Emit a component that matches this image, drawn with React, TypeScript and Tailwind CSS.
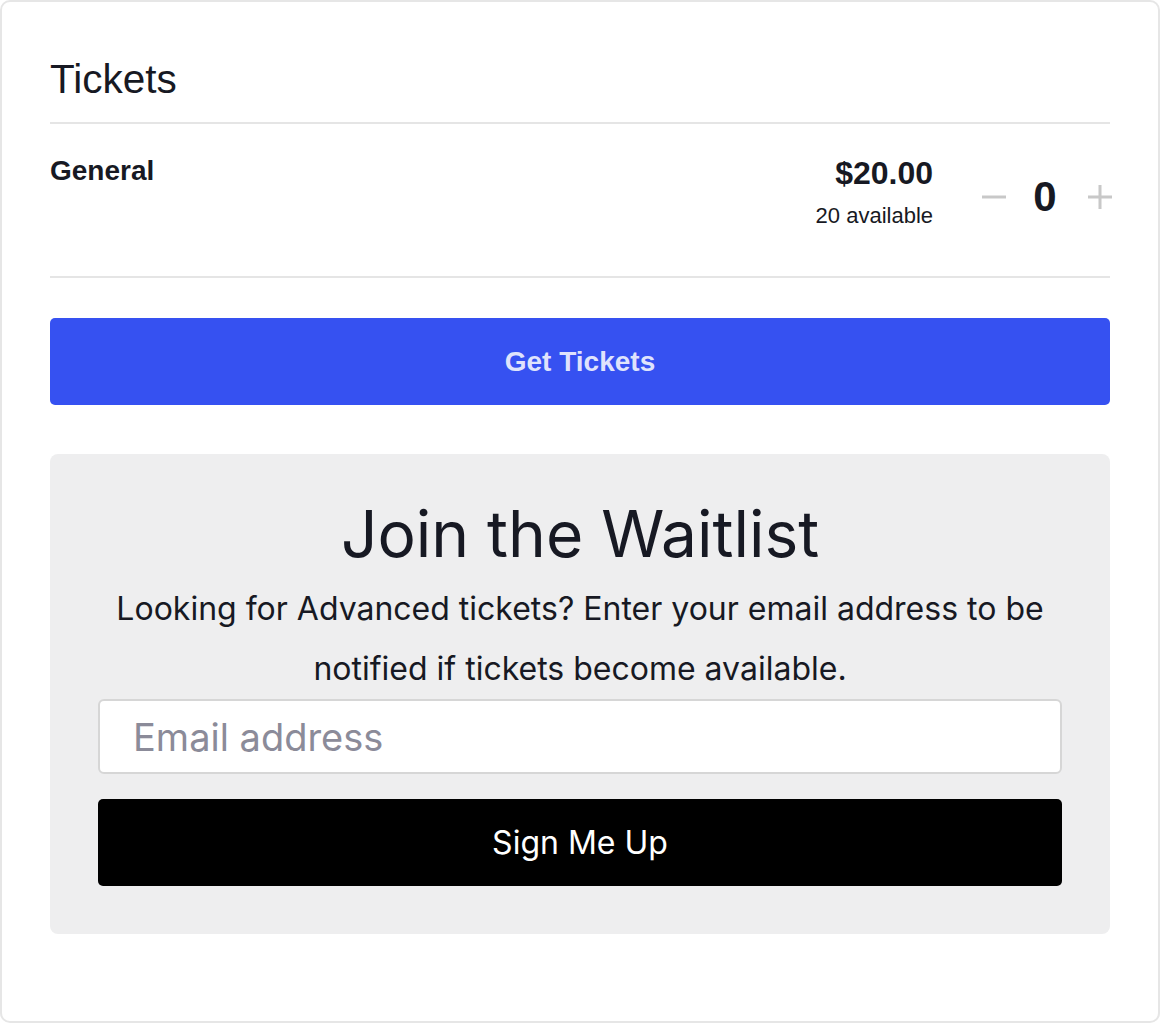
import React from "react";

const sans = "font-['Liberation_Sans',Arial,sans-serif]";
const inter = "font-['Inter',sans-serif]";

type Ticket = {
  name: string;
  price: string;
  available: number;
};

const ticket: Ticket = { name: "General", price: "$20.00", available: 20 };

function Stepper({ count }: { count: number }) {
  return (
    <div className="flex h-[84px] items-center">
      <button className="ml-[49px] flex h-[24px] w-[24px] items-center" aria-label="Decrease">
        <svg width="24" height="24" viewBox="0 0 24 24">
          <path d="M0 12h24" stroke="#c8c8c8" strokeWidth="3" />
        </svg>
      </button>
      <span className={`${sans} ml-[27px] w-[24px] text-center text-[42px] font-bold leading-[42px] text-[#171923]`}>
        {count}
      </span>
      <button className="ml-[31px] flex h-[24px] w-[24px] items-center" aria-label="Increase">
        <svg width="24" height="24" viewBox="0 0 24 24">
          <path d="M0 12h24M12 0v24" stroke="#c8c8c8" strokeWidth="3" />
        </svg>
      </button>
    </div>
  );
}

export default function App() {
  return (
    <div className="h-[1023px] w-[1160px] rounded-[10px] border-2 border-[#e6e6e6] bg-white px-[48px] pt-[53px]">
      <h1 className={`${sans} border-b-2 border-[#e5e5e5] pb-[19px] text-[40.5px] leading-[48px] text-[#171923]`}>
        Tickets
      </h1>

      <div className="flex h-[154px] items-start justify-between border-b-2 border-[#e5e5e5] pt-[31px]">
        <div className={`${sans} text-[28px] font-bold leading-[32px] text-[#171923]`}>{ticket.name}</div>
        <div className="-mr-[2px] flex items-start">
          <div className={`${sans} text-right text-[#171923]`}>
            <div className="text-[32px] font-bold leading-[36px]">{ticket.price}</div>
            <div className="mt-[12px] text-[22px] leading-[26px]">{ticket.available} available</div>
          </div>
          <Stepper count={0} />
        </div>
      </div>

      <button
        className={`${sans} mt-[40px] flex h-[87px] w-full items-center justify-center rounded-[5px] bg-[#3651f1] text-[28px] font-bold text-[#dfe3fc]`}
      >
        Get Tickets
      </button>

      <div className={`${inter} mt-[49px] flex flex-col items-center rounded-[8px] bg-[#eeeeef] px-[48px] pb-[48px] pt-[41px] text-[#171923]`}>
        <h2 className="text-[64px] leading-[77px]">Join the Waitlist</h2>
        <p className="mt-[7px] text-center text-[32px] leading-[60px]">
          Looking for Advanced tickets? Enter your email address to be notified if tickets become available.
        </p>
        <input
          type="email"
          placeholder="Email address"
          className="h-[75px] w-full rounded-[6px] border-2 border-[#d6d6d6] bg-white px-[33px] text-[38px] placeholder:text-[#8b8b99] focus:outline-none"
        />
        <button className="mt-[25px] h-[87px] w-full rounded-[5px] bg-black text-[32px] text-white">Sign Me Up</button>
      </div>
    </div>
  );
}
